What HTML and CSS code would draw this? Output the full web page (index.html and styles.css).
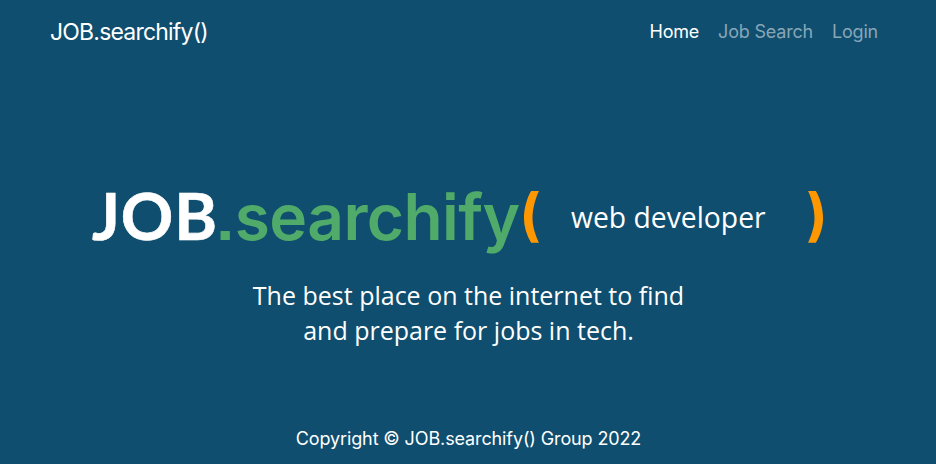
FILE: index.html
```html
<!DOCTYPE html>
<html lang="en">
<head>
<meta charset="utf-8">
<title>JOB.searchify()</title>
<link rel="stylesheet" href="styles.css">
</head>
<body>
<header class="navbar">
  <a class="brand">JOB.searchify()</a>
  <nav class="links"><a class="link active">Home</a><a class="link">Job Search</a><a class="link">Login</a></nav>
</header>
<main class="hero">
  <h1 class="logo"><span class="job">JOB</span><span class="search">.searchify</span><span class="paren">(</span><span class="term">web developer</span><span class="paren">)</span></h1>
  <p class="tagline"><span class="line">The best place on the internet to find</span><span class="line">and prepare for jobs in tech.</span></p>
</main>
<footer class="footer"><span class="copy">Copyright © JOB.searchify() Group 2022</span></footer>
</body>
</html>
```
FILE: styles.css
```css
* { box-sizing: border-box; }
body { margin: 0; height: 464px; display: flex; flex-direction: column; background: #0f4e6f; color: #fff; font-family: Inter, sans-serif; overflow: hidden; }
.navbar { height: 64px; padding: 0 58px 1px 50px; display: flex; align-items: center; justify-content: space-between; }
.brand { font-size: 23px; letter-spacing: -.8px; }
.links { display: flex; gap: 19px; font-size: 18px; letter-spacing: -.2px; }
.link { color: #87a6b7; }
.link.active { color: #fff; }
.hero { flex: 1; padding-top: 111px; }
.logo { margin: 0; height: 80px; padding-left: 92px; display: flex; align-items: baseline; line-height: 80px; font-weight: 700; white-space: nowrap; }
.job { width: 123px; font-family: Lato, sans-serif; font-size: 65px; -webkit-text-stroke: .6px #fff; letter-spacing: .9px; }
.search { width: 303px; color: #50aa69; font-size: 64px; font-weight: 600; letter-spacing: -.6px; font-feature-settings: "ss07" 1; }
.paren { width: 24px; display: flex; justify-content: center; color: #ff9800; font-family: Inter, sans-serif; font-size: 57px; position: relative; top: -5px; }
.term { width: 263px; padding-left: 29px; font: 400 28.3px "Open Sans", sans-serif; position: relative; top: -12px; }
.tagline { margin: 23px 0 0; padding-left: 1px; text-align: center; font: 400 25px/35px "Open Sans", sans-serif; }
.line { display: block; }
.footer { height: 52px; padding-left: 1px; display: flex; align-items: center; justify-content: center; font-size: 18px; letter-spacing: -.12px; }
```
